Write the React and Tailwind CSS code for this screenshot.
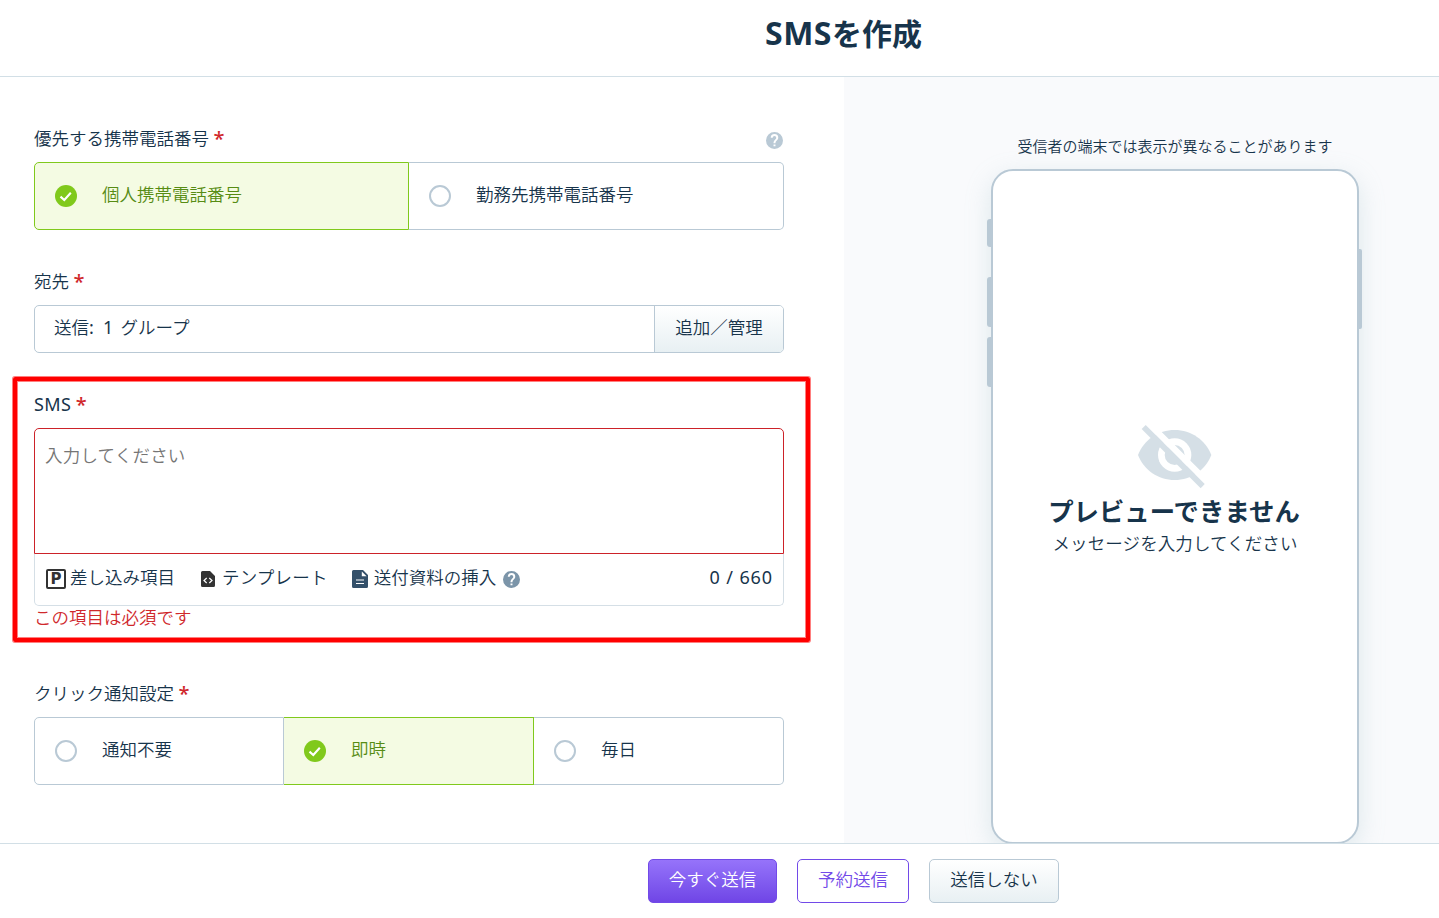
import { useState } from "react";

function CheckDot({ checked }) {
  if (!checked) {
    return <span className="w-[22px] h-[22px] shrink-0 rounded-full border-2 border-[#b9c9d5] bg-white" />;
  }
  return (
    <svg className="w-[22px] h-[22px] shrink-0" viewBox="0 0 22 22">
      <circle cx="11" cy="11" r="11" fill="#80c91c" />
      <path d="M5.5 11.6 L9.3 15 L15.8 7.7" fill="none" stroke="#fff" strokeWidth="2.1" />
    </svg>
  );
}

function HelpIcon({ className }) {
  return (
    <svg className={className} viewBox="0 0 24 24" fill="currentColor">
      <path d="M12 0a12 12 0 1 0 0 24 12 12 0 0 0 0-24zm1.4 20.2h-2.8v-2.7h2.8zm2.7-9.1-1.2 1.2c-1 1-1.5 1.8-1.5 3.6h-2.8v-.7c0-1.4.6-2.7 1.5-3.6l1.6-1.6c.5-.5.8-1.1.8-1.8a2.5 2.5 0 0 0-5 0H6.7a5.3 5.3 0 0 1 10.6 0c0 1.1-.5 2.2-1.2 2.9z" />
    </svg>
  );
}

function TemplateIcon() {
  return (
    <svg className="w-[14px] h-4" viewBox="0 0 14 16">
      <path d="M1.5 0H9l5 5v9.5a1.5 1.5 0 0 1-1.5 1.5h-11A1.5 1.5 0 0 1 0 14.5v-13A1.5 1.5 0 0 1 1.5 0z" fill="#333" />
      <path d="M5.7 7 3 9.5 5.7 12M8.3 7 11 9.5 8.3 12" fill="none" stroke="#fff" strokeWidth="1.2" />
    </svg>
  );
}

function DocumentIcon() {
  return (
    <svg className="w-4 h-[18px]" viewBox="0 0 16 18">
      <path d="M1.5 0H11l5 5v11.5a1.5 1.5 0 0 1-1.5 1.5h-13A1.5 1.5 0 0 1 0 16.5v-15A1.5 1.5 0 0 1 1.5 0z" fill="#34506a" />
      <path d="M9.8 1.4v4.8h4.8z" fill="#fff" />
      <path d="M4 10h8M4 13.5h8" stroke="#fff" strokeWidth="1.2" />
    </svg>
  );
}

function HiddenEyeIcon() {
  return (
    <svg className="w-[75px] h-[65px] mr-px" viewBox="322 42 225 195">
      <path
        d="M325 135C343 90 385 60 435 60s92 30 110 75c-18 45-60 75-110 75s-92-30-110-75z"
        fill="#d5dfe6"
      />
      <circle cx="435" cy="135" r="50" fill="#fff" />
      <circle cx="435" cy="135" r="30" fill="#d5dfe6" />
      <path d="M345 15 L372 42 L575 245 L575 272 L345 42z" fill="#fff" />
      <path d="M348 45 L525 222 L513 235 L336 57z" fill="#d5dfe6" />
    </svg>
  );
}

function Label({ children, help }) {
  return (
    <div className="h-9 flex justify-between">
      <span className="leading-[24px]">
        {children} <span className="text-[#d0282c] font-medium text-[20px] leading-[26px] inline-block h-4 align-top">*</span>
      </span>
      {help && <HelpIcon className="w-[17px] h-[17px] mt-[6px] mr-[1.5px] text-[#b9c9d5]" />}
    </div>
  );
}

function RadioGroup({ options, value, onChange }) {
  return (
    <div className="grid grid-flow-col auto-cols-fr h-[68px]">
      {options.map((o) => (
        <button
          key={o}
          onClick={() => onChange(o)}
          className={`flex items-center gap-[25px] pl-5 border-y border-r first:border-l first:rounded-l-[5px] last:rounded-r-[5px] ${
            o === value ? "bg-[#f4fbe3] border-[#80c91c] text-[#578c14]" : "border-[#b9c9d5]"
          }`}
        >
          <CheckDot checked={o === value} />
          <span className="pb-1">{o}</span>
        </button>
      ))}
    </div>
  );
}

function PhonePreview() {
  return (
    <aside className="flex-1 bg-[#f9fafc] pl-[147px] pt-[56px] overflow-hidden">
      <p className="w-[368px] text-center text-[15px] leading-[26px] whitespace-nowrap">
        受信者の端末では表示が異なることがあります
      </p>
      <div className="relative w-[368px] h-[675px] mt-[10px] rounded-[22px] border-2 border-[#b9c9d5] bg-white shadow-[0_8px_26px_rgba(150,185,195,0.28)]">
        <i className="absolute -left-[6px] top-12 w-1 h-7 bg-[#b9c9d5] rounded-l-[3px]" />
        <i className="absolute -left-[6px] top-[106px] w-1 h-[50px] bg-[#b9c9d5] rounded-l-[3px]" />
        <i className="absolute -left-[6px] top-[166px] w-1 h-[50px] bg-[#b9c9d5] rounded-l-[3px]" />
        <i className="absolute -right-[5px] top-[78px] w-[3px] h-20 bg-[#b9c9d5] rounded-r-[2px]" />
        <div className="flex flex-col items-center pt-[253px]">
          <HiddenEyeIcon />
          <h2 className="text-[25.4px] leading-[38px] font-bold mt-[3px] mr-[2px]">プレビューできません</h2>
          <p className="leading-[26px] tracking-[0.1px]">メッセージを入力してください</p>
        </div>
      </div>
    </aside>
  );
}

export default function App() {
  const [phone, setPhone] = useState("個人携帯電話番号");
  const [notify, setNotify] = useState("即時");
  const [message, setMessage] = useState("");

  return (
    <div className="w-[1439px] h-[918px] flex flex-col overflow-hidden bg-white text-[#17344b] text-[17.5px] font-[350] [font-family:'Noto_Sans','Noto_Sans_CJK_JP',sans-serif]">
      <header className="h-[77px] shrink-0 border-b border-[#d2dfe6] flex justify-center pl-[248px]">
        <h1 className="text-[30px] leading-[65px] font-bold">
          <span className="text-[32px] tracking-[0.5px]">SMS</span>を作成
        </h1>
      </header>

      <main className="flex h-[766px] shrink-0">
        <div className="w-[844px] shrink-0 pl-[34px] pr-[60px] pt-[49px] flex flex-col gap-[39px]">
          <section>
            <Label help>優先する携帯電話番号</Label>
            <RadioGroup
              options={["個人携帯電話番号", "勤務先携帯電話番号"]}
              value={phone}
              onChange={setPhone}
            />
          </section>

          <section>
            <Label>宛先</Label>
            <div className="h-12 flex border border-[#b9c9d5] rounded-[5px] overflow-hidden">
              <div className="flex-1 pl-[19px] leading-[43px]">
                送信<span className="tracking-[2.3px] text-[18px] font-normal">: </span>
                <span className="tracking-[1.2px] text-[18px] font-normal">1 </span>グループ
              </div>
              <button className="w-[129px] pb-[3px] border-l border-[#b9c9d5] bg-linear-to-b from-white to-[#e8f0f3]">
                追加／管理
              </button>
            </div>
          </section>

          <section className="relative">
            <div className="absolute -left-[21px] -top-[15px] w-[797px] h-[265px] border-4 border-[#ff0000] rounded-[2px] pointer-events-none shadow-[0_0_0_1px_rgba(255,0,0,0.5),inset_0_0_0_1px_rgba(255,0,0,0.5)]" />
            <Label>
              <span className="text-[18px] tracking-[0.4px] font-normal">SMS</span>
            </Label>
            <textarea
              value={message}
              onChange={(e) => setMessage(e.target.value)}
              placeholder="入力してください"
              className="block w-full h-[126px] resize-none rounded-t-[5px] border border-[#cc2229] px-[10px] pt-[13px] leading-[26px] tracking-[0.2px] placeholder:text-[#757575] outline-none"
            />
            <div className="h-[52px] flex items-center pb-[2px] pl-[11px] pr-[10px] border-x border-b border-[#d5dfe6] rounded-b-[5px]">
              <button className="flex items-center">
                <span className="w-5 h-5 mr-1 pt-[2px] border-2 border-[#333] rounded-[2px] flex items-center justify-center text-[#333] font-bold text-[15px] leading-none [font-family:'DejaVu_Sans',sans-serif]">
                  P
                </span>
                <span className="pb-[3px]">差し込み項目</span>
              </button>
              <button className="flex items-center gap-[7px] ml-[26px]">
                <TemplateIcon />
                <span className="pb-[3px] tracking-[0.2px]">テンプレート</span>
              </button>
              <button className="flex items-center gap-[6px] ml-6">
                <DocumentIcon />
                <span className="pb-[3px]">送付資料の挿入</span>
              </button>
              <HelpIcon className="w-[17px] h-[17px] ml-[7px] mt-[1px] text-[#7c95a9]" />
              <span className="ml-auto pb-[3px] text-[18px] tracking-[0.9px] font-normal">{message.length} / 660</span>
            </div>
            <p className="h-9 leading-[22px] text-[#d0282c]">この項目は必須です</p>
          </section>

          <section>
            <Label>クリック通知設定</Label>
            <RadioGroup options={["通知不要", "即時", "毎日"]} value={notify} onChange={setNotify} />
          </section>
        </div>
        <PhonePreview />
      </main>

      <footer className="flex-1 border-t border-[#d2dfe6] flex gap-5 pl-[648px] pt-[15px]">
        <button className="w-[129px] h-11 pb-[3px] rounded-[5px] border border-[#724ae8] bg-linear-to-b from-[#9673fa] to-[#7045e6] text-white">
          今すぐ送信
        </button>
        <button className="w-[112px] h-11 pb-[3px] rounded-[5px] border border-[#724ae8] text-[#724ae8]">
          予約送信
        </button>
        <button className="w-[130px] h-11 pb-[3px] rounded-[5px] border border-[#b9c9d5] bg-linear-to-b from-white to-[#e8f0f3]">
          送信しない
        </button>
      </footer>
    </div>
  );
}
